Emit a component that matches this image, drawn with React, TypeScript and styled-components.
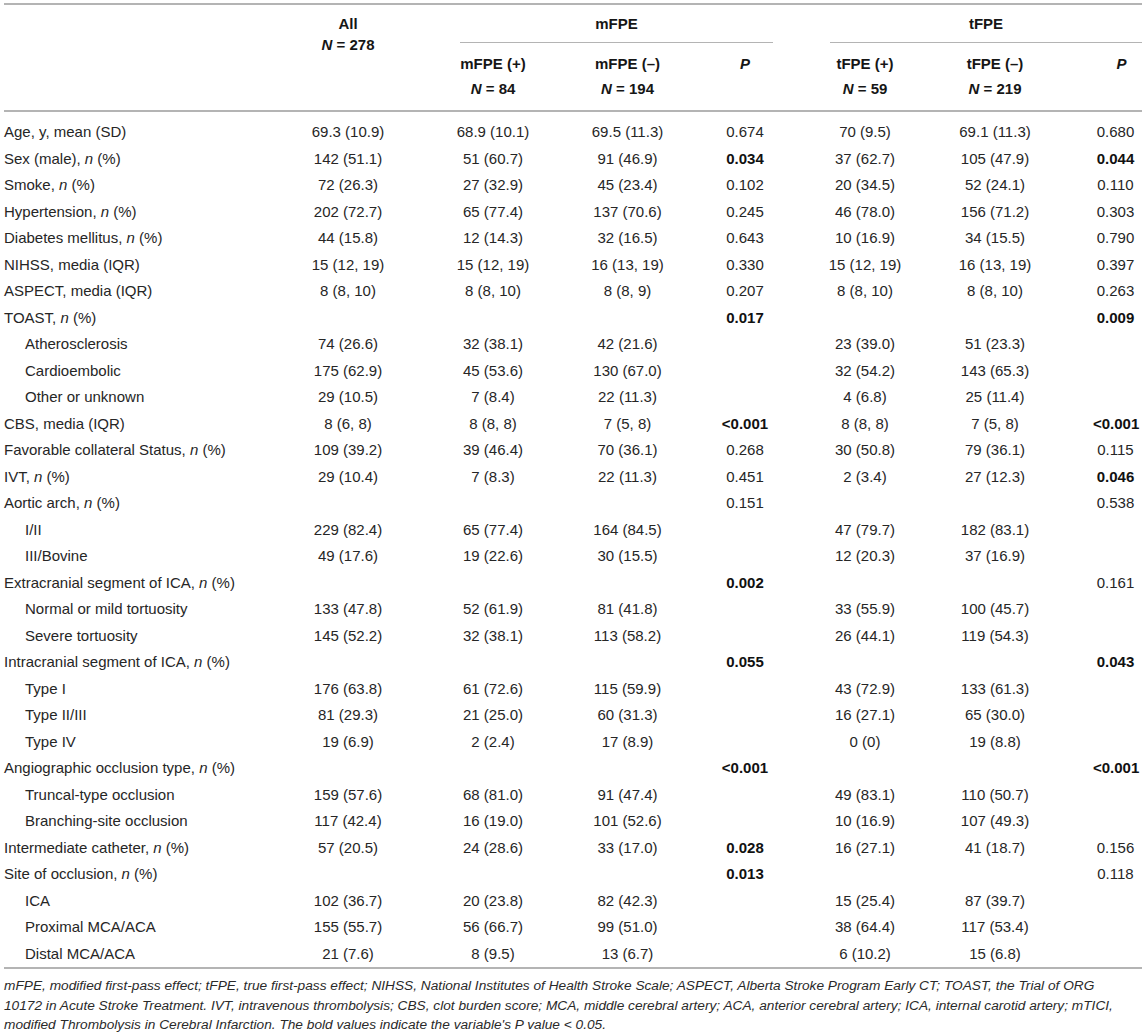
import React from "react";
import styled, { createGlobalStyle } from "styled-components";

const GlobalStyle = createGlobalStyle`
  html, body { margin: 0; padding: 0; background: #ffffff; }
  body {
    font-family: "Liberation Sans", Arial, Helvetica, sans-serif;
    color: #262626;
    -webkit-font-smoothing: antialiased;
  }
`;

const Page = styled.div`
  padding: 3px 4px 0 4px;
`;

const Table = styled.table`
  width: 100%;
  border-collapse: collapse;
  table-layout: fixed;
  font-size: 15px;
  border-top: 2px solid #b4b4b4;
  border-bottom: 2px solid #b4b4b4;
`;

const Head = styled.thead`
  border-bottom: 2px solid #b4b4b4;
`;

const HeadCell = styled.th<{ $tight?: boolean; $shift?: number }>`
  font-weight: bold;
  text-align: center;
  vertical-align: top;
  color: #161616;
  white-space: nowrap;
  padding: ${(p) => (p.$tight ? "8px 4px 0" : "8.5px 4px 8.5px")};
  padding-left: ${(p) => (p.$shift ? `${p.$shift}px` : "4px")};
  line-height: ${(p) => (p.$tight ? "21px" : "25px")};
`;

const GroupCell = styled.th`
  padding: 8.5px 0 0;
  vertical-align: top;
`;

const GroupBox = styled.div<{ $left: number; $right: number }>`
  margin: 0 ${(p) => p.$right}px 0 ${(p) => p.$left}px;
  padding-bottom: 8px;
  line-height: 20px;
  font-weight: bold;
  text-align: center;
  color: #161616;
  border-bottom: 1.5px solid #b4b4b4;
`;

const Body = styled.tbody`
  tr:first-child td {
    padding-top: 12.5px;
  }
`;

const Row = styled.tr`
  td:last-child {
    padding-left: 18px;
  }
`;

const Cell = styled.td`
  padding: 5px 4px;
  line-height: 16.5px;
  text-align: center;
  white-space: nowrap;
`;

const LabelCell = styled.td<{ $sub?: boolean }>`
  padding: 5px 0 5px ${(p) => (p.$sub ? "21px" : "0")};
  line-height: 16.5px;
  text-align: left;
  white-space: nowrap;
`;

const PCell = styled(Cell)<{ $bold?: boolean }>`
  font-weight: ${(p) => (p.$bold ? "bold" : "normal")};
  color: ${(p) => (p.$bold ? "#111" : "#262626")};
`;

const Em = styled.i`
  font-style: italic;
`;

const Note = styled.div`
  padding-top: 7px;
  font-size: 13.7px;
  font-style: italic;
  line-height: 19.5px;
  color: #2a2a2a;
`;

const NoteLine = styled.div`
  white-space: nowrap;
`;

type PV = { v: string; b?: boolean };
type RowData = {
  label: React.ReactNode;
  sub?: boolean;
  v?: [string, string, string, string, string];
  mP?: PV;
  tP?: PV;
};

const n = <Em>n</Em>;

const rows: RowData[] = [
  { label: "Age, y, mean (SD)", v: ["69.3 (10.9)", "68.9 (10.1)", "69.5 (11.3)", "70 (9.5)", "69.1 (11.3)"], mP: { v: "0.674" }, tP: { v: "0.680" } },
  { label: <>Sex (male), {n} (%)</>, v: ["142 (51.1)", "51 (60.7)", "91 (46.9)", "37 (62.7)", "105 (47.9)"], mP: { v: "0.034", b: true }, tP: { v: "0.044", b: true } },
  { label: <>Smoke, {n} (%)</>, v: ["72 (26.3)", "27 (32.9)", "45 (23.4)", "20 (34.5)", "52 (24.1)"], mP: { v: "0.102" }, tP: { v: "0.110" } },
  { label: <>Hypertension, {n} (%)</>, v: ["202 (72.7)", "65 (77.4)", "137 (70.6)", "46 (78.0)", "156 (71.2)"], mP: { v: "0.245" }, tP: { v: "0.303" } },
  { label: <>Diabetes mellitus, {n} (%)</>, v: ["44 (15.8)", "12 (14.3)", "32 (16.5)", "10 (16.9)", "34 (15.5)"], mP: { v: "0.643" }, tP: { v: "0.790" } },
  { label: "NIHSS, media (IQR)", v: ["15 (12, 19)", "15 (12, 19)", "16 (13, 19)", "15 (12, 19)", "16 (13, 19)"], mP: { v: "0.330" }, tP: { v: "0.397" } },
  { label: "ASPECT, media (IQR)", v: ["8 (8, 10)", "8 (8, 10)", "8 (8, 9)", "8 (8, 10)", "8 (8, 10)"], mP: { v: "0.207" }, tP: { v: "0.263" } },
  { label: <>TOAST, {n} (%)</>, mP: { v: "0.017", b: true }, tP: { v: "0.009", b: true } },
  { label: "Atherosclerosis", sub: true, v: ["74 (26.6)", "32 (38.1)", "42 (21.6)", "23 (39.0)", "51 (23.3)"] },
  { label: "Cardioembolic", sub: true, v: ["175 (62.9)", "45 (53.6)", "130 (67.0)", "32 (54.2)", "143 (65.3)"] },
  { label: "Other or unknown", sub: true, v: ["29 (10.5)", "7 (8.4)", "22 (11.3)", "4 (6.8)", "25 (11.4)"] },
  { label: "CBS, media (IQR)", v: ["8 (6, 8)", "8 (8, 8)", "7 (5, 8)", "8 (8, 8)", "7 (5, 8)"], mP: { v: "<0.001", b: true }, tP: { v: "<0.001", b: true } },
  { label: <>Favorable collateral Status, {n} (%)</>, v: ["109 (39.2)", "39 (46.4)", "70 (36.1)", "30 (50.8)", "79 (36.1)"], mP: { v: "0.268" }, tP: { v: "0.115" } },
  { label: <>IVT, {n} (%)</>, v: ["29 (10.4)", "7 (8.3)", "22 (11.3)", "2 (3.4)", "27 (12.3)"], mP: { v: "0.451" }, tP: { v: "0.046", b: true } },
  { label: <>Aortic arch, {n} (%)</>, mP: { v: "0.151" }, tP: { v: "0.538" } },
  { label: "I/II", sub: true, v: ["229 (82.4)", "65 (77.4)", "164 (84.5)", "47 (79.7)", "182 (83.1)"] },
  { label: "III/Bovine", sub: true, v: ["49 (17.6)", "19 (22.6)", "30 (15.5)", "12 (20.3)", "37 (16.9)"] },
  { label: <>Extracranial segment of ICA, {n} (%)</>, mP: { v: "0.002", b: true }, tP: { v: "0.161" } },
  { label: "Normal or mild tortuosity", sub: true, v: ["133 (47.8)", "52 (61.9)", "81 (41.8)", "33 (55.9)", "100 (45.7)"] },
  { label: "Severe tortuosity", sub: true, v: ["145 (52.2)", "32 (38.1)", "113 (58.2)", "26 (44.1)", "119 (54.3)"] },
  { label: <>Intracranial segment of ICA, {n} (%)</>, mP: { v: "0.055", b: true }, tP: { v: "0.043", b: true } },
  { label: "Type I", sub: true, v: ["176 (63.8)", "61 (72.6)", "115 (59.9)", "43 (72.9)", "133 (61.3)"] },
  { label: "Type II/III", sub: true, v: ["81 (29.3)", "21 (25.0)", "60 (31.3)", "16 (27.1)", "65 (30.0)"] },
  { label: "Type IV", sub: true, v: ["19 (6.9)", "2 (2.4)", "17 (8.9)", "0 (0)", "19 (8.8)"] },
  { label: <>Angiographic occlusion type, {n} (%)</>, mP: { v: "<0.001", b: true }, tP: { v: "<0.001", b: true } },
  { label: "Truncal-type occlusion", sub: true, v: ["159 (57.6)", "68 (81.0)", "91 (47.4)", "49 (83.1)", "110 (50.7)"] },
  { label: "Branching-site occlusion", sub: true, v: ["117 (42.4)", "16 (19.0)", "101 (52.6)", "10 (16.9)", "107 (49.3)"] },
  { label: <>Intermediate catheter, {n} (%)</>, v: ["57 (20.5)", "24 (28.6)", "33 (17.0)", "16 (27.1)", "41 (18.7)"], mP: { v: "0.028", b: true }, tP: { v: "0.156" } },
  { label: <>Site of occlusion, {n} (%)</>, mP: { v: "0.013", b: true }, tP: { v: "0.118" } },
  { label: "ICA", sub: true, v: ["102 (36.7)", "20 (23.8)", "82 (42.3)", "15 (25.4)", "87 (39.7)"] },
  { label: "Proximal MCA/ACA", sub: true, v: ["155 (55.7)", "56 (66.7)", "99 (51.0)", "38 (64.4)", "117 (53.4)"] },
  { label: "Distal MCA/ACA", sub: true, v: ["21 (7.6)", "8 (9.5)", "13 (6.7)", "6 (10.2)", "15 (6.8)"] },
];

const widths = [286, 116, 174, 95, 140, 100, 160, 67];

const NLabel = ({ value }: { value: string }) => (
  <>
    <Em>N</Em> = {value}
  </>
);

export default function App() {
  return (
    <Page>
      <GlobalStyle />
      <Table>
        <colgroup>
          {widths.map((w, i) => (
            <col key={i} style={{ width: w }} />
          ))}
        </colgroup>
        <Head>
          <tr>
            <HeadCell rowSpan={2} />
            <HeadCell rowSpan={2} $tight>
              All
              <br />
              <NLabel value="278" />
            </HeadCell>
            <GroupCell colSpan={3}>
              <GroupBox $left={54} $right={42}>mFPE</GroupBox>
            </GroupCell>
            <GroupCell colSpan={3}>
              <GroupBox $left={15} $right={0}>tFPE</GroupBox>
            </GroupCell>
          </tr>
          <tr>
            <HeadCell>
              mFPE (+)
              <br />
              <NLabel value="84" />
            </HeadCell>
            <HeadCell>
              mFPE (–)
              <br />
              <NLabel value="194" />
            </HeadCell>
            <HeadCell>
              <Em>P</Em>
            </HeadCell>
            <HeadCell>
              tFPE (+)
              <br />
              <NLabel value="59" />
            </HeadCell>
            <HeadCell>
              tFPE (–)
              <br />
              <NLabel value="219" />
            </HeadCell>
            <HeadCell $shift={30}>
              <Em>P</Em>
            </HeadCell>
          </tr>
        </Head>
        <Body>
          {rows.map((r, i) => (
            <Row key={i}>
              <LabelCell $sub={r.sub}>{r.label}</LabelCell>
              <Cell>{r.v?.[0]}</Cell>
              <Cell>{r.v?.[1]}</Cell>
              <Cell>{r.v?.[2]}</Cell>
              <PCell $bold={r.mP?.b}>{r.mP?.v}</PCell>
              <Cell>{r.v?.[3]}</Cell>
              <Cell>{r.v?.[4]}</Cell>
              <PCell $bold={r.tP?.b}>{r.tP?.v}</PCell>
            </Row>
          ))}
        </Body>
      </Table>
      <Note>
        <NoteLine>
          mFPE, modified first-pass effect; tFPE, true first-pass effect; NIHSS, National Institutes of Health Stroke Scale; ASPECT, Alberta Stroke Program Early CT; TOAST, the Trial of ORG
        </NoteLine>
        <NoteLine>
          10172 in Acute Stroke Treatment. IVT, intravenous thrombolysis; CBS, clot burden score; MCA, middle cerebral artery; ACA, anterior cerebral artery; ICA, internal carotid artery; mTICI,
        </NoteLine>
        <NoteLine>
          modified Thrombolysis in Cerebral Infarction. The bold values indicate the variable's P value &lt; 0.05.
        </NoteLine>
      </Note>
    </Page>
  );
}
